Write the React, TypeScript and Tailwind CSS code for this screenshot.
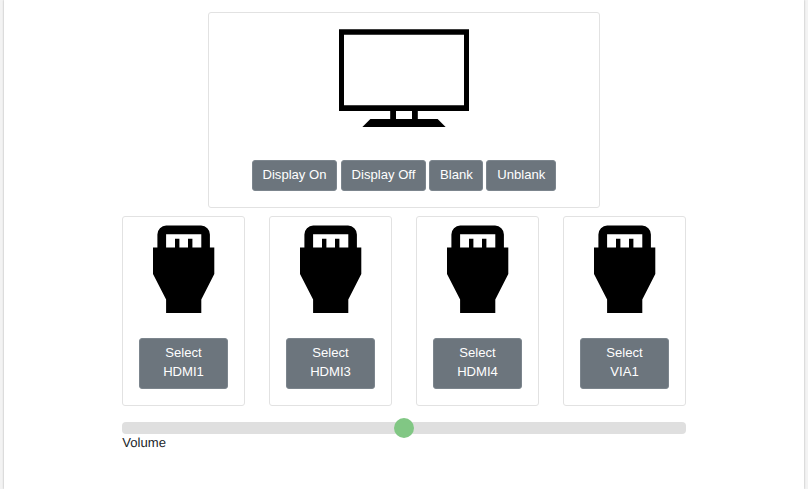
import React from "react";

const displayActions = [
  { label: "Display On", width: "w-[85px]", gap: "mr-[4px]" },
  { label: "Display Off", width: "w-[85px]", gap: "mr-[3.4px]" },
  { label: "Blank", width: "w-[54px]", gap: "mr-[3.1px]" },
  { label: "Unblank", width: "w-[69.5px]", gap: "" },
];

const inputs = ["HDMI1", "HDMI3", "HDMI4", "VIA1"];

function DisplayIcon() {
  return (
    <svg className="block h-[98px] w-[130px]" viewBox="0 0 130 98" aria-hidden="true">
      <path fillRule="evenodd" d="M0 .3H130V82H0ZM5 5.7V76.3H125V5.7Z" />
      <path d="M51.2 81H57V91H51.2ZM73 81H78.8V91H73Z" />
      <path d="M31.4 90H98.6L106.6 98H23.4Z" />
    </svg>
  );
}

function PlugIcon() {
  return (
    <svg className="block h-[88px] w-[62px]" viewBox="0 0 62 88" aria-hidden="true">
      <path
        fillRule="evenodd"
        d="M4.4 22.6V9.4A8.8 8.8 0 0 1 13.2 .6H48.1A8.8 8.8 0 0 1 56.9 9.4V22.6H61.3V49L48.3 74.5V88H13.1V74.5L0 49V22.6H4.4ZM13.1 9.3V22.6H22V13.8H26.4V22.6H35V13.8H39.4V22.6H48.3V9.3Z"
      />
    </svg>
  );
}

export default function App() {
  return (
    <div className="h-[489px] overflow-hidden bg-[#f3f3f3] px-[4px] font-['Liberation_Sans',Arial,sans-serif] text-[13.1px] leading-[19.6px] text-[#212529] [text-rendering:geometricPrecision]">
      <main className="flex h-full flex-col items-center bg-white pt-[12px] shadow-[0_0_2px_rgba(0,0,0,0.3)]">
        <section className="flex h-[196px] w-[392px] flex-col items-center rounded-[3px] border border-[#e2e2e2] pt-[16px]">
          <DisplayIcon />
          <div className="mt-[33px] flex">
            {displayActions.map(({ label, width, gap }) => (
              <button
                key={label}
                className={`h-[31px] rounded-[3px] border border-[#7c858d] bg-[#6c757d] pb-[1px] text-center whitespace-nowrap text-white ${width} ${gap}`}
              >
                {label}
              </button>
            ))}
          </div>
        </section>
        <section className="mt-[8px] flex w-[564px] justify-between">
          {inputs.map((name) => (
            <div
              key={name}
              className="flex h-[190px] w-[123px] flex-col items-center rounded-[3px] border border-[#e2e2e2] pt-[8px]"
            >
              <PlugIcon />
              <button className="mt-[25px] h-[51px] w-[89px] rounded-[3px] border border-[#7c858d] bg-[#6c757d] pb-[4px] text-center leading-[19px] text-white">
                Select
                <br />
                {name}
              </button>
            </div>
          ))}
        </section>
        <section className="mt-[16px] w-[563.4px]">
          <div className="flex h-[12.3px] items-center justify-center rounded-[4px] bg-[#dfdfdf]">
            <div className="size-[20.5px] shrink-0 rounded-full bg-[#81c784]" />
          </div>
          <label className="-mt-[1.3px] block">Volume</label>
        </section>
      </main>
    </div>
  );
}
